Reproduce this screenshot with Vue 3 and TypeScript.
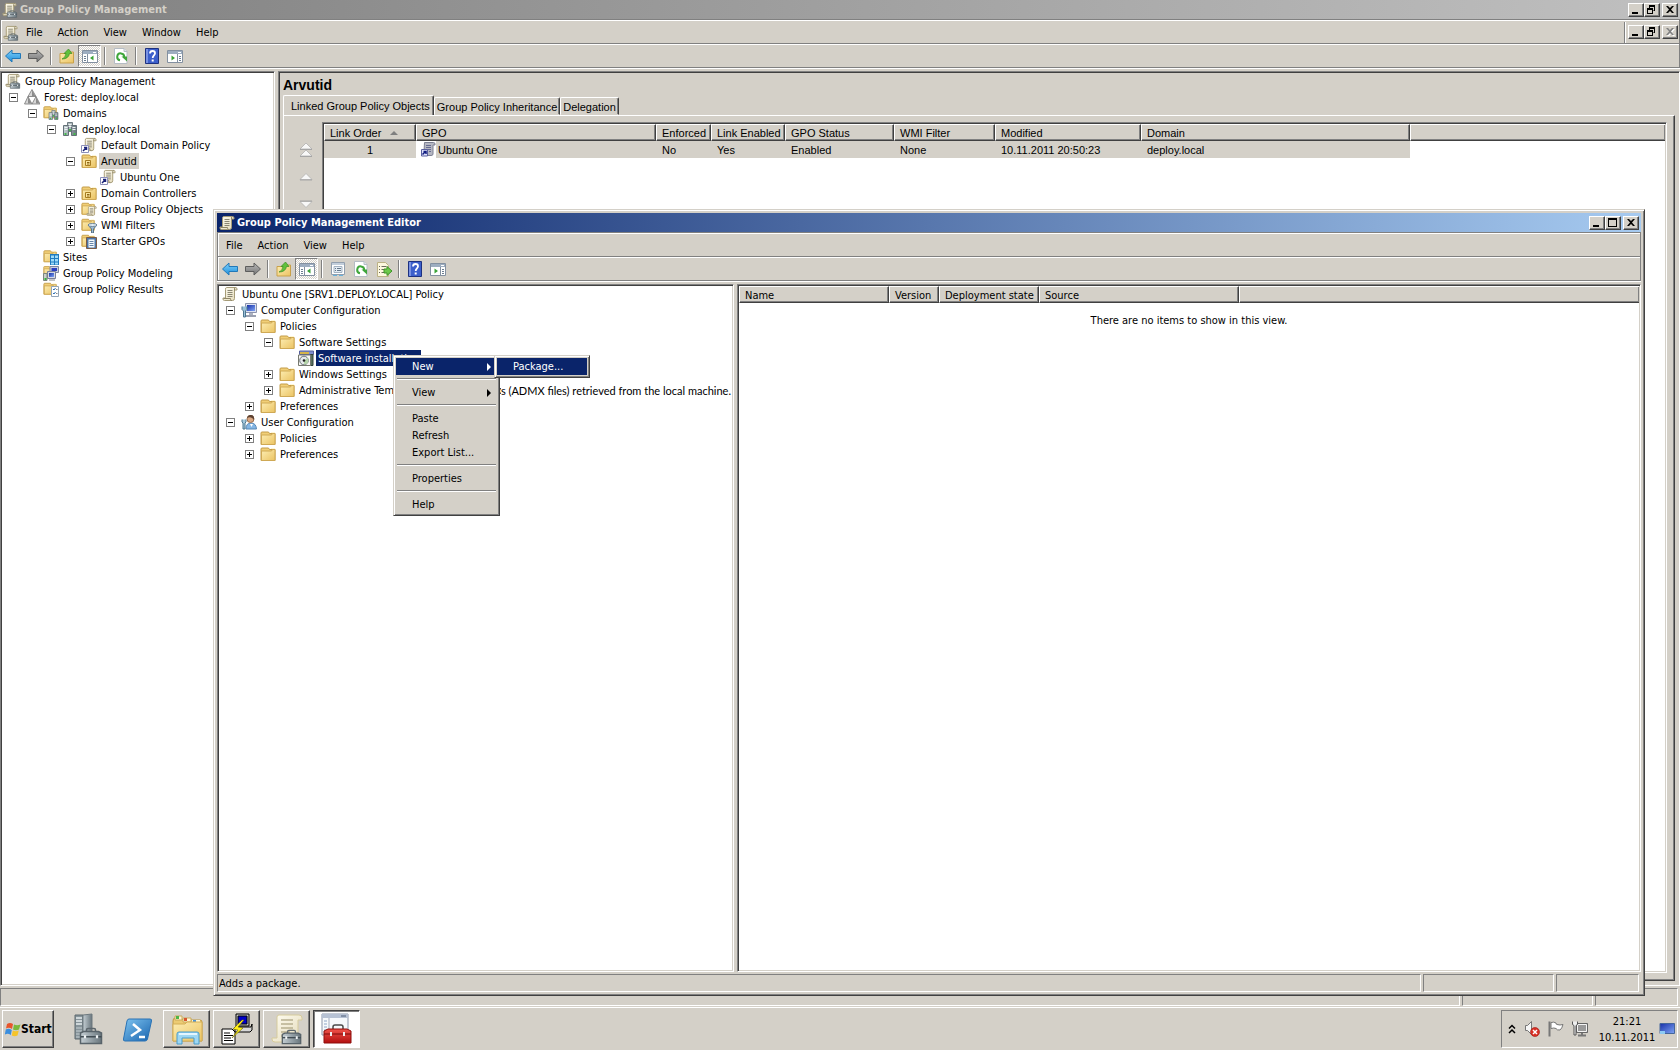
<script setup lang="ts">
interface TreeNode {
  label: string
  tail?: string
  icon: string
  level: number
  state?: 'open' | 'closed'
  selected?: 'active' | 'inactive'
}

interface Tool {
  icon?: string
  name?: string
  pressed?: boolean
}

const mainMenus = ['File', 'Action', 'View', 'Window', 'Help']
const editorMenus = ['File', 'Action', 'View', 'Help']

const mainTools: Tool[] = [
  { icon: 'back', name: 'Back' },
  { icon: 'forward', name: 'Forward' },
  {},
  { icon: 'up', name: 'Up one level' },
  { icon: 'tree-pane', name: 'Console tree', pressed: true },
  {},
  { icon: 'refresh', name: 'Refresh' },
  {},
  { icon: 'help', name: 'Help' },
  { icon: 'action-pane', name: 'Action pane' },
]

const editorTools: Tool[] = [
  { icon: 'back', name: 'Back' },
  { icon: 'forward', name: 'Forward' },
  {},
  { icon: 'up', name: 'Up one level' },
  { icon: 'tree-pane', name: 'Console tree', pressed: true },
  {},
  { icon: 'props', name: 'Properties' },
  { icon: 'refresh', name: 'Refresh' },
  { icon: 'export', name: 'Export list' },
  {},
  { icon: 'help', name: 'Help' },
  { icon: 'action-pane', name: 'Action pane' },
]

const mainTree: TreeNode[] = [
  { label: 'Group Policy Management', icon: 'gpm', level: 0 },
  { label: 'Forest: deploy.local', icon: 'forest', level: 1, state: 'open' },
  { label: 'Domains', icon: 'domains', level: 2, state: 'open' },
  { label: 'deploy.local', icon: 'servers', level: 3, state: 'open' },
  { label: 'Default Domain Policy', icon: 'link', level: 4 },
  { label: 'Arvutid', icon: 'ou', level: 4, state: 'open', selected: 'inactive' },
  { label: 'Ubuntu One', icon: 'link', level: 5 },
  { label: 'Domain Controllers', icon: 'ou', level: 4, state: 'closed' },
  { label: 'Group Policy Objects', icon: 'gpos', level: 4, state: 'closed' },
  { label: 'WMI Filters', icon: 'wmi', level: 4, state: 'closed' },
  { label: 'Starter GPOs', icon: 'starter', level: 4, state: 'closed' },
  { label: 'Sites', icon: 'sites', level: 2 },
  { label: 'Group Policy Modeling', icon: 'modeling', level: 2 },
  { label: 'Group Policy Results', icon: 'results', level: 2 },
]

const editorTree: TreeNode[] = [
  { label: 'Ubuntu One [SRV1.DEPLOY.LOCAL] Policy', icon: 'scroll', level: 0 },
  { label: 'Computer Configuration', icon: 'computer', level: 1, state: 'open' },
  { label: 'Policies', icon: 'folder', level: 2, state: 'open' },
  { label: 'Software Settings', icon: 'folder', level: 3, state: 'open' },
  { label: 'Software installation', icon: 'software', level: 4, selected: 'active' },
  { label: 'Windows Settings', icon: 'folder', level: 3, state: 'closed' },
  { label: 'Administrative Templates: Policy definition', tail: 's (ADMX files) retrieved from the local machine.', icon: 'folder', level: 3, state: 'closed' },
  { label: 'Preferences', icon: 'folder', level: 2, state: 'closed' },
  { label: 'User Configuration', icon: 'user', level: 1, state: 'open' },
  { label: 'Policies', icon: 'folder', level: 2, state: 'closed' },
  { label: 'Preferences', icon: 'folder', level: 2, state: 'closed' },
]

const tabs = ['Linked Group Policy Objects', 'Group Policy Inheritance', 'Delegation']
const gpoColumns = ['Enforced', 'Link Enabled', 'GPO Status', 'WMI Filter', 'Modified', 'Domain']
const gpoValues = ['No', 'Yes', 'Enabled', 'None', '10.11.2011 20:50:23', 'deploy.local']
const orderArrows = ['top', 'raise', 'lower', 'bottom']
const packageColumns = ['Name', 'Version', 'Deployment state', 'Source']

const menuGroups = [
  [{ label: 'New', sub: true, active: true }],
  [{ label: 'View', sub: true, active: false }],
  [
    { label: 'Paste', sub: false, active: false },
    { label: 'Refresh', sub: false, active: false },
    { label: 'Export List...', sub: false, active: false },
  ],
  [{ label: 'Properties', sub: false, active: false }],
  [{ label: 'Help', sub: false, active: false }],
]

const taskButtons = [
  { icon: 'explorer', name: 'Windows Explorer', pressed: false },
  { icon: 'putty', name: 'PuTTY', pressed: false },
  { icon: 'gpm-large', name: 'Group Policy Management', pressed: false },
  { icon: 'mmc', name: 'Group Policy Management Editor', pressed: true },
]

const indent = (level: number) => ({ paddingLeft: `${3 + 19 * Math.max(0, level - 1)}px` })
</script>

<template>
  <div class="desktop">
    <svg class="sprite" aria-hidden="true">
      <defs>
        <linearGradient id="g-folder" x1="0" y1="0" x2="1" y2="1"><stop offset="0" stop-color="#fdeeb4" /><stop offset="1" stop-color="#ebc362" /></linearGradient>
        <linearGradient id="g-paper" x1="0" y1="0" x2="1" y2="1"><stop offset="0" stop-color="#fffdf2" /><stop offset="1" stop-color="#e3d9b8" /></linearGradient>
        <linearGradient id="g-blue" x1="0" y1="0" x2="0" y2="1"><stop offset="0" stop-color="#7fd0fa" /><stop offset="1" stop-color="#1f8fdc" /></linearGradient>
        <linearGradient id="g-gray" x1="0" y1="0" x2="0" y2="1"><stop offset="0" stop-color="#b8b8b8" /><stop offset="1" stop-color="#757575" /></linearGradient>
        <linearGradient id="g-steel" x1="0" y1="0" x2="1" y2="0"><stop offset="0" stop-color="#c4ced3" /><stop offset="1" stop-color="#69767d" /></linearGradient>
        <linearGradient id="g-screen" x1="0" y1="0" x2="1" y2="1"><stop offset="0" stop-color="#1730a8" /><stop offset="1" stop-color="#7fa4f4" /></linearGradient>
        <linearGradient id="g-ps" x1="0" y1="0" x2="1" y2="1"><stop offset="0" stop-color="#7fc4f0" /><stop offset="1" stop-color="#1763ae" /></linearGradient>
        <linearGradient id="g-red" x1="0" y1="0" x2="0" y2="1"><stop offset="0" stop-color="#f0534a" /><stop offset="1" stop-color="#b3100f" /></linearGradient>
      </defs>

      <symbol id="scroll" viewBox="0 0 16 16">
        <path d="M4.500 1.500h9q1.500 0 1.500 1.500v1h-2.500v8.500q0 2-2 2h-8q-1.500 0-1.500-1.500v-1h2.500v-8.500q0-2 1-2z" fill="url(#g-paper)" stroke="#a69c78" />
        <path d="M12.500 4.500V3q0-1.500 1-1.500M1.500 12.500h7v1q.5 1 1.500 1" fill="none" stroke="#8f8667" />
        <path d="M5.500 4.500h5M5.500 6.500h5M5.500 8.500h5M5.500 10.500h5" stroke="#8a8673" />
      </symbol>
      <symbol id="toolbox" viewBox="0 0 16 12">
        <path d="M5 3.500V2q0-1 1-1h4q1 0 1 1v1.500" fill="none" stroke="#5c666c" />
        <path d="M1 4l2-1h10l2 1v7H1z" fill="url(#g-steel)" stroke="#58636a" />
        <path d="M1 6.500h14" stroke="#414c53" /><path d="M4 5.500v2M12 5.500v2" stroke="#eef2f4" stroke-width="1.500" />
      </symbol>
      <symbol id="gpm" viewBox="0 0 16 16">
        <use href="#scroll" width="15" height="15" /><use href="#toolbox" x="4" y="8" width="12" height="8" />
      </symbol>
      <symbol id="link" viewBox="0 0 16 16">
        <use href="#scroll" x="1" width="15" height="15" />
        <path d="M.5 8.500h7v7h-7z" fill="#fff" stroke="#8c8fb8" /><path d="M2 14l3.500-3.500M3 10.500h2.500V13" fill="none" stroke="#1a2378" stroke-width="1.500" />
      </symbol>
      <symbol id="link-dim" viewBox="0 0 16 16">
        <path d="M4.500 1.500h9q1.500 0 1.500 1.500v1h-2v9q0 1.500-2 1.500h-8v-3h1z" fill="#b5b7c2" stroke="#7d8093" />
        <path d="M6 4.500h5M6 6.500h5M7 8.500h4M9 10.500h2" stroke="#666b91" />
        <path d="M1.500 8.500h6v6.500h-6z" fill="#dfe2fa" stroke="#5a60a0" /><path d="M2.500 13.500l3-3M3.500 10.500h2.500v2.500" fill="none" stroke="#101c80" stroke-width="1.500" />
      </symbol>
      <symbol id="forest" viewBox="0 0 16 16">
        <path d="M8 .5l4 7H4zM4 7.500l4 7.500H.5zM12 7.500l4 7.500H8z" fill="#d6d6d6" stroke="#777" stroke-linejoin="round" stroke-width=".8" />
        <path d="M8 1v6.500h3.500zM4 8v6.500h3.500zM12 8v6.500h3.500z" fill="#8c8c8c" />
      </symbol>
      <symbol id="folder" viewBox="0 0 16 16">
        <path d="M1 4V3q0-1 1-1h6.500l1 1.500H15v11H1z" fill="#f1cf77" stroke="#c39c48" />
        <path d="M1.500 5h10l1-1.500H15v11H1.500z" fill="url(#g-folder)" stroke="#cfa955" /><path d="M11 2.500h4" stroke="#fff7d5" />
      </symbol>
      <symbol id="servers" viewBox="0 0 16 16">
        <path d="M5.500 1.500h5v9h-5z" fill="#aeb8bc" stroke="#6f7b81" /><path d="M1.500 4.500h5v10h-5zM9.500 4.500h5v10h-5z" fill="url(#g-steel)" stroke="#647178" />
        <path d="M6.500 3.500h3M6.500 5.500h3M2.500 6.500h3M2.500 8.500h3M10.500 6.500h3M10.500 8.500h3" stroke="#eef3f4" /><path d="M2.500 12h2v2h-2zM11.500 12h2v2h-2zM7 8h2v2H7z" fill="#43b84a" />
      </symbol>
      <symbol id="domains" viewBox="0 0 16 16">
        <use href="#folder" width="14" height="14" /><use href="#servers" x="5" y="4" width="11" height="12" />
      </symbol>
      <symbol id="ou" viewBox="0 0 16 16">
        <use href="#folder" width="16" height="16" /><path d="M4.500 7.500h5v5h-5z" fill="#fbe6a0" stroke="#a77c21" /><path d="M6 9.500h2.500M6 11h2.500" stroke="#8f6614" />
      </symbol>
      <symbol id="gpos" viewBox="0 0 16 16">
        <use href="#folder" width="14" height="15" /><use href="#scroll" x="5" y="4" width="11" height="12" />
      </symbol>
      <symbol id="wmi" viewBox="0 0 16 16">
        <use href="#folder" width="14" height="15" /><path d="M7 8h9l-3.500 4v4h-2v-4z" fill="#9dbbd2" stroke="#5a7488" /><ellipse cx="11.500" cy="8" rx="4.500" ry="1.500" fill="#dfeaf2" stroke="#6e8698" />
      </symbol>
      <symbol id="starter" viewBox="0 0 16 16">
        <use href="#folder" width="14" height="15" /><path d="M5.500 4.500h10v11h-10z" fill="#4c76a8" stroke="#7b5b45" /><path d="M7.500 6.500h6v8h-6z" fill="#f4f8fc" /><path d="M8.500 8.500h4M8.500 10.500h4M8.500 12.500h4" stroke="#6685a8" />
      </symbol>
      <symbol id="sites" viewBox="0 0 16 16">
        <use href="#folder" width="14" height="14" /><path d="M7 5h9v11H7z" fill="#1f7bc0" /><path d="M8 6.500h3v2.500H8zM12 6.500h3v2.500h-3zM8 10h3v2.500H8zM12 10h3v2.500h-3zM8 13.500h3v2H8zM12 13.500h3v2h-3z" fill="#9fdcf8" />
      </symbol>
      <symbol id="modeling" viewBox="0 0 16 16">
        <use href="#folder" width="12" height="12" /><path d="M7 1.500h8.500v6H7z" fill="#c9cfe0" stroke="#7f88a0" /><path d="M8.500 3H14v3H8.500z" fill="#2b3fc0" />
        <path d="M4.500 6.500h8v7h-8z" fill="#d5d9e4" stroke="#79809a" /><path d="M6 8h5v4H6z" fill="url(#g-screen)" /><path d="M.5 8.500h3.500v7H.5z" fill="#c9d0c9" stroke="#7d867d" /><path d="M1.500 13h2v2h-2z" fill="#35b43b" /><path d="M6 15h6" stroke="#888" />
      </symbol>
      <symbol id="results" viewBox="0 0 16 16">
        <use href="#folder" width="14" height="15" /><path d="M8.500 5.500h7v10h-7z" fill="#fff" stroke="#93a4b6" /><path d="M10 8l1 1 1.500-2M10 12l1 1 1.500-2" fill="none" stroke="#2d6fb2" /><path d="M13 8.500h1.500M13 12.500h1.500" stroke="#888" />
      </symbol>
      <symbol id="computer" viewBox="0 0 16 16">
        <path d="M4.500 1.500h11v9h-11z" fill="#dde2f0" stroke="#8c93ad" /><path d="M6 3h8v6H6z" fill="url(#g-screen)" /><path d="M8 11h4v2H8z" fill="#adb3c2" /><path d="M5 14h10" stroke="#9aa0b0" stroke-width="2" />
        <path d="M1 4.500v3l1.500 1.500v6h2v-6L6 7.500v-3" fill="#9ac0d8" stroke="#4d7690" />
      </symbol>
      <symbol id="user" viewBox="0 0 16 16">
        <path d="M5 15q0-6 5-6t5.500 6z" fill="#84b6e4" stroke="#5988b5" /><circle cx="9.500" cy="5" r="3.500" fill="#d9a884" stroke="#9b7050" /><path d="M6 4q1-3.500 4-3 3.500 0 3 5-1-2-3-2.500T6 4z" fill="#5c4131" /><path d="M9 10l1.500 3L12 10z" fill="#fff" />
        <path d="M1 5.500v2.500l1 1v6h2V9l1-1V5.500" fill="#a4c8dc" stroke="#4d7690" />
      </symbol>
      <symbol id="software" viewBox="0 0 16 16">
        <path d="M1.500 1h14v3.500h-14z" fill="#7f8fd0" stroke="#56609c" /><path d="M2 2h9v2H2z" fill="#d6b548" /><path d="M12.500 4.500h2.500v11h-2.500z" fill="#59715d" stroke="#34433a" /><path d="M.5 5h12v10.500H.5z" fill="#f8f8f4" stroke="#77796f" />
        <circle cx="6" cy="10.500" r="4.300" fill="#e5e9ec" stroke="#6c7479" /><path d="M6 10.500l3.500-2.500A4 4 0 016 14.500z" fill="#b5d5a9" /><circle cx="6" cy="10.500" r="1.300" fill="#222" />
      </symbol>

      <symbol id="back" viewBox="0 0 16 16"><path d="M.5 8L7 2v3.500h8.500v5H7V14z" fill="url(#g-blue)" stroke="#2278b8" stroke-linejoin="round" /></symbol>
      <symbol id="forward" viewBox="0 0 16 16"><path d="M15.500 8L9 2v3.500H.5v5H9V14z" fill="url(#g-gray)" stroke="#5d5d5d" stroke-linejoin="round" /></symbol>
      <symbol id="up" viewBox="0 0 16 16">
        <path d="M1 5.500h6l1-1.500h6.500v11H1z" fill="url(#g-folder)" stroke="#c9a14a" />
        <path d="M3 11q3.500-1 4-5.500H5l4.500-4.500L13 5.500h-2.500Q9.500 11 3 11z" fill="#5fc13c" stroke="#3b8d22" stroke-width=".7" />
      </symbol>
      <symbol id="tree-pane" viewBox="0 0 16 16">
        <path d="M.5 2.500h15v12H.5z" fill="#fff" stroke="#8390a0" /><path d="M1 3h14v3H1z" fill="#9dadc0" /><path d="M11 4.500h3" stroke="#fff" /><path d="M5.500 6v8" stroke="#8390a0" />
        <path d="M2 8.500h2M2 10.500h2M2 12.500h2" stroke="#6d7f92" /><path d="M11.500 7.500v5L8 10z" fill="#3aa336" />
      </symbol>
      <symbol id="action-pane" viewBox="0 0 16 16">
        <path d="M.5 2.500h15v12H.5z" fill="#fff" stroke="#8390a0" /><path d="M1 3h14v3H1z" fill="#9dadc0" /><path d="M11 4.500h3" stroke="#fff" /><path d="M10.500 6v8" stroke="#8390a0" />
        <path d="M12 8.500h2M12 10.500h2M12 12.500h2" stroke="#6d7f92" /><path d="M4.500 7.500v5L8 10z" fill="#3aa336" />
      </symbol>
      <symbol id="refresh" viewBox="0 0 16 16">
        <path d="M1.500.5h9.500l3 3v12H1.500z" fill="#fff" stroke="#b5bcc4" /><path d="M11 .5v3h3" fill="#dfe6ea" stroke="#b5bcc4" />
        <path d="M7 12.300A3.500 3.500 0 1111.200 9" fill="none" stroke="#3fa63b" stroke-width="2" /><path d="M8.500 8.500h5.500v5z" fill="#3fa63b" />
      </symbol>
      <symbol id="props" viewBox="0 0 16 16">
        <path d="M1.500 1.500h13v12h-13z" fill="#fff" stroke="#929fae" /><path d="M2 2h12v2H2z" fill="#c2cedb" /><path d="M4 5.500h8v6H4z" fill="#e4edf5" stroke="#a3b2c2" /><path d="M5 7.500h1M7 7.500h4M5 9.500h1M7 9.500h4" stroke="#66788a" /><path d="M3 14.500h4M9 14.500h4" stroke="#67b2dd" />
      </symbol>
      <symbol id="export" viewBox="0 0 16 16">
        <path d="M1.500 1.500h8l3 3v11h-11z" fill="#fdf8df" stroke="#bcb285" /><path d="M3 5.500h1M5.500 5.500h5M3 8.500h1M5.500 8.500h4M3 11.500h1M5.500 11.500h3" stroke="#6b6b5d" />
        <path d="M8 8h3V5.500l5 4.500-5 4.500V12H8z" fill="#6cc84a" stroke="#3e9428" />
      </symbol>
      <symbol id="help" viewBox="0 0 16 16">
        <path d="M1.500.5h13v15h-13z" fill="#3c5fcb" stroke="#1d3180" /><path d="M2 1h2v14H2z" fill="#7891e2" />
        <path d="M6 5.500Q6 3 8.500 3T11 5.300C11 7.300 8.700 7.500 8.700 10" fill="none" stroke="#fff" stroke-width="1.800" /><path d="M7.700 11.500h2v2h-2z" fill="#fff" />
      </symbol>

      <symbol id="minimize" viewBox="0 0 14 12"><path d="M3 8h6v2H3z" /></symbol>
      <symbol id="maximize" viewBox="0 0 14 12"><path d="M2 1h9v9H2zM3 3v6h7V3z" fill-rule="evenodd" /></symbol>
      <symbol id="restore" viewBox="0 0 14 12"><path d="M4 1h6v6H8.500V6H9V3H5v1H4zM2 4h6v6H2zM3 6v3h4V6z" fill-rule="evenodd" /></symbol>
      <symbol id="close" viewBox="0 0 14 12"><path d="M3 2h2l2 2 2-2h2L8 5.500 11 9H9L7 7 5 9H3l3-3.500z" /></symbol>

      <symbol id="raise" viewBox="0 0 14 16"><path d="M7 4.500l6 6H1z" fill="#f8f8f8" stroke="#aaa" stroke-width=".7" /><path d="M1 11h12" stroke="#a5a5a5" /></symbol>
      <symbol id="lower" viewBox="0 0 14 16"><path d="M7 11.500l6-6H1z" fill="#f8f8f8" stroke="#aaa" stroke-width=".7" /><path d="M1 5h12" stroke="#a5a5a5" /></symbol>
      <symbol id="top" viewBox="0 0 14 16"><path d="M7 1l6 6H1zM7 8l6 6H1z" fill="#f8f8f8" stroke="#aaa" stroke-width=".7" /><path d="M1 7.500h12M1 14.500h12" stroke="#a5a5a5" /></symbol>
      <symbol id="bottom" viewBox="0 0 14 16"><path d="M7 8l6-6H1zM7 15l6-6H1z" fill="#f8f8f8" stroke="#aaa" stroke-width=".7" /></symbol>

      <symbol id="flag4" viewBox="0 0 16 16">
        <path d="M2 3q3-2 6 0L7 8Q4 6 1 7.500z" fill="#e8552c" /><path d="M9 3.500q3 1.500 6.500 0L14 8.500q-3 1.500-6 0z" fill="#7ab83a" /><path d="M.8 8.500q3-1.500 6 .5l-1 5Q3 12-.2 13.500z" fill="#3b8ede" /><path d="M7.800 9.500q3 1.500 6 0l-1.300 5q-3 1.500-5.700 0z" fill="#f6c42a" />
      </symbol>
      <symbol id="server-manager" viewBox="0 0 32 32">
        <path d="M4 2h8v24H4z" fill="#87949a" stroke="#5d696f" /><path d="M12 2l9-1v25h-9z" fill="url(#g-steel)" stroke="#6d797f" /><path d="M5 5h6M5 8h6M5 11h6" stroke="#e6ecee" stroke-width="1.500" /><path d="M5 15h6M5 18h6M5 21h6M5 24h6" stroke="#c5ced2" />
        <use href="#toolbox" x="8" y="14" width="24" height="18" />
      </symbol>
      <symbol id="powershell" viewBox="0 0 32 32">
        <path d="M8 6h21q2 0 1.500 2l-4 18q-.5 2-2.500 2H4q-2 0-1.500-2L6 8q.5-2 2-2z" fill="url(#g-ps)" stroke="#2a72b4" /><path d="M12 11l7 6-9 6M18 24h6" fill="none" stroke="#fff" stroke-width="2.500" />
      </symbol>
      <symbol id="explorer" viewBox="0 0 32 32">
        <path d="M2 8q0-3 2-3h6l2 2h17q2 0 2 2v19H2z" fill="#eccb73" stroke="#bf9a45" /><path d="M4 3h7v4H4z" fill="#fff6d2" stroke="#caa95a" /><path d="M5 3h3v3H5z" fill="#4db648" /><path d="M12 5h8v4h-8z" fill="#fff6d2" stroke="#caa95a" /><path d="M13 5h3v3h-3z" fill="#d8562f" /><path d="M21 7h8v3h-8z" fill="#fff6d2" /><path d="M22 7h3v2h-3z" fill="#4a93d6" />
        <path d="M2 11h12l2-2h15v19H2z" fill="url(#g-folder)" stroke="#d4ae57" />
        <path d="M6 31V21q0-2 2-2h18q2 0 2 2v10h-5v-6H11v6z" fill="#9ed7f3" stroke="#4b9ccb" /><path d="M8 21h18" stroke="#e4f6ff" stroke-width="2" />
      </symbol>
      <symbol id="putty" viewBox="0 0 32 32">
        <path d="M15 1h13v12H15z" fill="#c6c6c6" stroke="#000" /><path d="M17 3h9v8h-9z" fill="#0000c8" stroke="#000" /><path d="M14 14h16l1-3v6l-2 2H14z" fill="#d7d7d7" stroke="#000" />
        <path d="M1 16h10l3 3v12H1z" fill="#fff" stroke="#000" /><path d="M3 20h6M3 22.500h9M3 25h7M3 27.500h9" stroke="#000" /><path d="M21 7l-9 9 5 1-6 8L22 15l-5-1 6-7z" fill="#ffef19" stroke="#6b6400" stroke-width=".6" />
      </symbol>
      <symbol id="gpm-large" viewBox="0 0 32 32">
        <path d="M8 2h20q3 0 3 3v2h-4v18q0 4-4 4H4q-3 0-3-3v-1h5V4q0-2 2-2z" fill="url(#g-paper)" stroke="#d6cb9c" /><path d="M10 7h12M10 11h12M10 15h12M10 19h9M10 23h6" stroke="#b8b090" stroke-width="1.500" /><use href="#toolbox" x="10" y="16" width="21" height="16" />
      </symbol>
      <symbol id="mmc" viewBox="0 0 32 32">
        <path d="M1 1h26v21H1z" fill="#f6f9fc" stroke="#8994a8" /><path d="M1 1h26v4H1z" fill="#b7c2d4" /><path d="M20 3h5" stroke="#4f5e78" /><path d="M8 5v17" stroke="#a4aebf" /><path d="M3 8h3M3 11h3M3 14h3M3 17h3" stroke="#8ea6c7" />
        <path d="M12 17v-3q0-2 2-2h6q2 0 2 2v3" fill="none" stroke="#4b4b4b" stroke-width="1.500" /><path d="M3 18l4-2h19l4 2v12H3z" fill="url(#g-red)" stroke="#8e0f0c" /><path d="M3 21h27" stroke="#7c0c0a" /><path d="M10 19v4M23 19v4" stroke="#eee" stroke-width="2" />
      </symbol>
      <symbol id="chevrons" viewBox="0 0 8 10"><path d="M1 4.500l3-3 3 3M1 9l3-3 3 3" fill="none" stroke="#000" stroke-width="1.500" /></symbol>
      <symbol id="volume" viewBox="0 0 16 16">
        <path d="M1.500 4.500h2l4-4v13l-4-4h-2z" fill="#f6f6f6" stroke="#777" /><circle cx="11" cy="11" r="4.500" fill="#d93025" stroke="#a01a12" stroke-width=".6" /><path d="M9 9l4 4M13 9l-4 4" stroke="#fff" stroke-width="1.500" />
      </symbol>
      <symbol id="flag" viewBox="0 0 16 16"><path d="M1.500.5v15" stroke="#777" stroke-width="2" /><path d="M3 1.500q3-1 5 .5 0 1.500 1 1.500 3 1 6 0-1 4-3 5.500-3 .5-4-1.500-2-1-5 0z" fill="#fff" stroke="#777" /></symbol>
      <symbol id="network" viewBox="0 0 16 16"><path d="M4.500 2.500h11v9h-11z" fill="#9a9a9a" stroke="#666" /><path d="M5.500 3.500h9v7h-9z" fill="none" stroke="#f4f4f4" /><path d="M6 14.500h8M10 12v2" stroke="#777" stroke-width="2" /><path d="M.5.500v3l1.500 1V14h2V4.500l1.500-1v-3" fill="#eee" stroke="#555" /></symbol>
      <symbol id="show-desktop" viewBox="0 0 16 16"><path d="M1 2.500h14.500v10H1z" fill="url(#g-screen)" stroke="#44669c" /><path d="M1 10h5v3H1z" fill="#8ccaf4" /></symbol>
    </svg>

    <section class="console">
      <header class="titlebar dimmed">
        <svg class="icon"><use href="#gpm" /></svg>
        <h1 class="caption">Group Policy Management</h1>
        <div class="controls">
          <button type="button" class="ctl" aria-label="Minimize"><svg><use href="#minimize" /></svg></button>
          <button type="button" class="ctl" aria-label="Restore"><svg><use href="#restore" /></svg></button>
          <button type="button" class="ctl last" aria-label="Close"><svg><use href="#close" /></svg></button>
        </div>
      </header>

      <div class="bars">
        <nav class="menubar">
          <svg class="icon"><use href="#gpm" /></svg>
          <button v-for="m in mainMenus" :key="m" type="button" class="menu-btn">{{ m }}</button>
          <div class="controls mdi">
            <button type="button" class="ctl" aria-label="Minimize child"><svg><use href="#minimize" /></svg></button>
            <button type="button" class="ctl" aria-label="Restore child"><svg><use href="#restore" /></svg></button>
            <button type="button" class="ctl last" disabled aria-label="Close child"><svg><use href="#close" /></svg></button>
          </div>
        </nav>
        <div class="toolbar">
          <template v-for="(t, i) in mainTools" :key="i">
            <button v-if="t.icon" type="button" class="tool" :class="{ pressed: t.pressed }" :aria-label="t.name"><svg class="icon"><use :href="'#' + t.icon" /></svg></button>
            <span v-else class="tool-sep"></span>
          </template>
        </div>
      </div>

      <div class="panes">
        <aside class="sunken main-side">
          <ul class="tree">
            <li v-for="(n, i) in mainTree" :key="i" class="node" :style="indent(n.level)">
              <span v-if="n.level" class="twist"><button v-if="n.state" type="button" class="box" :class="n.state" :aria-label="n.label"></button></span>
              <svg class="icon"><use :href="'#' + n.icon" /></svg>
              <span class="label" :class="n.selected">{{ n.label }}</span>
            </li>
          </ul>
        </aside>

        <main class="sunken details">
          <h2 class="heading">Arvutid</h2>
          <div class="tabs" role="tablist">
            <button v-for="(t, i) in tabs" :key="t" type="button" role="tab" class="tab" :class="{ current: i === 0 }">{{ t }}</button>
          </div>
          <div class="tab-panel">
            <div class="order">
              <button v-for="a in orderArrows" :key="a" type="button" class="order-btn" :aria-label="a"><svg><use :href="'#' + a" /></svg></button>
            </div>
            <div class="sunken list">
              <table class="grid gpo-grid">
                <colgroup><col class="w-order" /><col class="w-gpo" /><col class="w-enf" /><col class="w-link" /><col class="w-status" /><col class="w-wmi" /><col class="w-mod" /><col class="w-dom" /><col /></colgroup>
                <thead>
                  <tr>
                    <th>Link Order<span class="sort"></span></th>
                    <th>GPO</th>
                    <th v-for="c in gpoColumns" :key="c">{{ c }}</th>
                    <th class="rest"></th>
                  </tr>
                </thead>
                <tbody>
                  <tr>
                    <td class="num">1</td>
                    <td class="gpo-cell"><span class="gpo-name"><span class="gpo-icon"><svg class="icon"><use href="#link-dim" /></svg></span><span class="gpo-text">Ubuntu One</span></span></td>
                    <td v-for="v in gpoValues" :key="v">{{ v }}</td>
                    <td class="rest"></td>
                  </tr>
                </tbody>
              </table>
            </div>
          </div>
        </main>
      </div>

      <footer class="status">
        <span class="field grow"></span><span class="field mid"></span><span class="field end"></span>
      </footer>
    </section>

    <section class="editor">
      <header class="titlebar">
        <svg class="icon"><use href="#scroll" /></svg>
        <h2 class="caption">Group Policy Management Editor</h2>
        <div class="controls">
          <button type="button" class="ctl" aria-label="Minimize editor"><svg><use href="#minimize" /></svg></button>
          <button type="button" class="ctl" aria-label="Maximize editor"><svg><use href="#maximize" /></svg></button>
          <button type="button" class="ctl last" aria-label="Close editor"><svg><use href="#close" /></svg></button>
        </div>
      </header>

      <div class="bars">
        <nav class="menubar bare">
          <button v-for="m in editorMenus" :key="m" type="button" class="menu-btn">{{ m }}</button>
        </nav>
        <div class="toolbar">
          <template v-for="(t, i) in editorTools" :key="i">
            <button v-if="t.icon" type="button" class="tool" :class="{ pressed: t.pressed }" :aria-label="t.name"><svg class="icon"><use :href="'#' + t.icon" /></svg></button>
            <span v-else class="tool-sep"></span>
          </template>
        </div>
      </div>

      <div class="panes">
        <aside class="sunken editor-side">
          <ul class="tree">
            <li v-for="(n, i) in editorTree" :key="i" class="node" :style="indent(n.level)">
              <span v-if="n.level" class="twist"><button v-if="n.state" type="button" class="box" :class="n.state" :aria-label="n.label"></button></span>
              <svg class="icon"><use :href="'#' + n.icon" /></svg>
              <span class="label" :class="n.selected">{{ n.label }}</span><span v-if="n.tail" class="tail">{{ n.tail }}</span>
            </li>
          </ul>
        </aside>
        <div class="sunken packages">
          <table class="grid">
            <colgroup><col class="w-name" /><col class="w-ver" /><col class="w-state" /><col class="w-source" /><col /></colgroup>
            <thead>
              <tr><th v-for="c in packageColumns" :key="c">{{ c }}</th><th class="rest"></th></tr>
            </thead>
          </table>
          <p class="empty">There are no items to show in this view.</p>
        </div>
      </div>

      <footer class="status">
        <span class="field grow">Adds a package.</span><span class="field mid"></span><span class="field end"></span>
      </footer>
    </section>

    <div class="popup context" role="menu">
      <template v-for="(g, gi) in menuGroups" :key="gi">
        <hr v-if="gi" class="rule" />
        <button v-for="m in g" :key="m.label" type="button" role="menuitem" class="item" :class="{ active: m.active }">{{ m.label }}<span v-if="m.sub" class="arrow"></span></button>
      </template>
    </div>
    <div class="popup submenu" role="menu">
      <button type="button" role="menuitem" class="item active">Package...</button>
    </div>

    <footer class="taskbar">
      <button type="button" class="task start"><svg class="icon"><use href="#flag4" /></svg>Start</button>
      <button type="button" class="quick" aria-label="Server Manager"><svg class="large"><use href="#server-manager" /></svg></button>
      <button type="button" class="quick" aria-label="Windows PowerShell"><svg class="large"><use href="#powershell" /></svg></button>
      <button v-for="b in taskButtons" :key="b.name" type="button" class="task app" :class="{ pressed: b.pressed }" :aria-label="b.name"><svg class="large"><use :href="'#' + b.icon" /></svg></button>
      <div class="tray">
        <button type="button" class="tray-btn narrow" aria-label="Show hidden icons"><svg class="chev"><use href="#chevrons" /></svg></button>
        <button type="button" class="tray-btn" aria-label="Volume"><svg class="icon"><use href="#volume" /></svg></button>
        <button type="button" class="tray-btn" aria-label="Action Center"><svg class="icon"><use href="#flag" /></svg></button>
        <button type="button" class="tray-btn" aria-label="Network"><svg class="icon"><use href="#network" /></svg></button>
        <time class="clock"><span>21:21</span><span>10.11.2011</span></time>
        <button type="button" class="tray-btn desk" aria-label="Show desktop"><svg class="icon"><use href="#show-desktop" /></svg></button>
      </div>
    </footer>
  </div>
</template>

<style>
html,
body {
  background: #d4d0c8;
}
</style>

<style scoped>
.desktop {
  position: relative;
  display: flex;
  flex-direction: column;
  height: 100vh;
  overflow: hidden;
  background: #d4d0c8;
  color: #000;
  font: 11px/16px "DejaVu Sans Condensed", "DejaVu Sans", sans-serif;
}
.desktop *,
.desktop *::before,
.desktop *::after {
  box-sizing: border-box;
}
.sprite {
  position: absolute;
  width: 0;
  height: 0;
}
button {
  margin: 0;
  padding: 0;
  border: 0;
  background: none;
  color: inherit;
  font: inherit;
}
.icon {
  display: block;
  flex: none;
  width: 16px;
  height: 16px;
}
.console {
  flex: 1;
  min-height: 0;
  display: flex;
  flex-direction: column;
}

/* title bars */
.titlebar {
  flex: none;
  display: flex;
  align-items: center;
  gap: 2px;
  height: 19px;
  padding: 0 2px;
  background: linear-gradient(90deg, #0a246a, #a6caf0);
  color: #fff;
}
.titlebar.dimmed {
  background: linear-gradient(90deg, #808080, #c0c0c0);
  color: #d4d0c8;
}
.caption {
  margin: 0;
  font-size: 11px;
  font-weight: bold;
  line-height: 16px;
}
.controls {
  display: flex;
  align-items: center;
  margin-left: auto;
}
.ctl {
  width: 16px;
  height: 14px;
  border: 1px solid;
  border-color: #fff #404040 #404040 #fff;
  background: #d4d0c8;
  box-shadow: inset -1px -1px #808080;
}
.ctl svg {
  display: block;
  width: 14px;
  height: 12px;
}
.ctl.last {
  margin-left: 2px;
}
.ctl:disabled svg {
  fill: #808080;
  filter: drop-shadow(1px 1px 0 #fff);
}

/* menu bar and toolbar */
.bars {
  flex: none;
  border: 1px solid #808080;
  border-bottom: 0;
  box-shadow: inset 1px 1px #fff, 0 1px #fff;
  margin-bottom: 3px;
}
.menubar {
  display: flex;
  align-items: center;
  height: 24px;
  padding: 2px 1px 0 2px;
  border-bottom: 1px solid #808080;
}
.menubar.bare {
  padding-left: 1px;
}
.menu-btn {
  padding: 0 8px 0 7px;
  line-height: 18px;
}
.mdi {
  align-self: stretch;
  padding: 0 0 2px 3px;
  border-left: 1px solid #808080;
  box-shadow: inset 1px 0 #fff;
}
.toolbar {
  display: flex;
  align-items: center;
  height: 24px;
  border-top: 1px solid #fff;
  border-bottom: 1px solid #808080;
}
.tool {
  display: grid;
  place-items: center;
  width: 23px;
  height: 22px;
}
.tool.pressed {
  border: 1px solid;
  border-color: #808080 #fff #fff #808080;
  background: conic-gradient(#fff 25%, #d4d0c8 0 50%, #fff 0 75%, #d4d0c8 0) 0 0 / 2px 2px;
}
.tool-sep {
  width: 2px;
  height: 18px;
  margin: 0 3px;
  border-left: 1px solid #808080;
  border-right: 1px solid #fff;
}

/* panes */
.panes {
  flex: 1;
  min-height: 0;
  display: flex;
  gap: 3px;
}
.sunken {
  padding: 1px;
  border: 1px solid;
  border-color: #808080 #fff #fff #808080;
  background: #fff;
  box-shadow: inset 1px 1px #404040, inset -1px -1px #d4d0c8;
  overflow: hidden;
}
.main-side {
  flex: none;
  width: 275px;
}
.editor-side {
  flex: none;
  width: 517px;
}
.tree {
  margin: 0;
  padding: 0;
  list-style: none;
}
.node {
  display: flex;
  align-items: center;
  height: 16px;
  white-space: nowrap;
}
.twist {
  flex: none;
  display: flex;
  width: 19px;
  padding-left: 4px;
}
.box {
  display: block;
  width: 9px;
  height: 9px;
  border: 1px solid #808080;
  background: linear-gradient(#000, #000) center / 5px 1px no-repeat;
}
.box.closed {
  background: linear-gradient(#000, #000) center / 5px 1px no-repeat, linear-gradient(#000, #000) center / 1px 5px no-repeat;
}
.label {
  min-width: 0;
  margin-left: 2px;
  padding: 2px 2px 0;
  line-height: 14px;
  overflow: hidden;
}
.label.inactive {
  background: #d4d0c8;
}
.label.active {
  background: #0a246a;
  color: #fff;
}
.tail {
  flex: none;
  margin-left: auto;
  padding: 2px 1px 0 0;
  font-family: Lato, "DejaVu Sans Condensed", sans-serif;
  line-height: 14px;
}

/* details pane */
.details {
  flex: 1;
  min-width: 0;
  display: flex;
  flex-direction: column;
  padding: 1px 4px 4px;
  background: #d4d0c8;
  font-family: "Liberation Sans", Arial, sans-serif;
}
.heading {
  flex: none;
  margin: 0;
  padding-top: 2px;
  font-size: 14px;
  line-height: 20px;
}
.tabs {
  flex: none;
  display: flex;
  align-items: flex-end;
  height: 20px;
}
.tab {
  height: 18px;
  padding: 1px 2px 0;
  border: 1px solid;
  border-color: #fff #404040 transparent #fff;
  border-radius: 2px 2px 0 0;
  box-shadow: inset -1px 0 #808080;
  white-space: nowrap;
}
.tab.current {
  height: 21px;
  margin-bottom: -1px;
  padding: 0 3px 0 7px;
  border-bottom: 0;
  background: #d4d0c8;
}
.tab-panel {
  flex: 1;
  min-height: 0;
  display: flex;
  padding: 6px 7px 7px 0;
  border: 1px solid;
  border-color: #fff #404040 #404040 #fff;
  box-shadow: inset -1px -1px #808080;
}
.order {
  flex: none;
  display: flex;
  flex-direction: column;
  align-items: center;
  gap: 11px;
  width: 38px;
  padding: 20px 0 0 6px;
}
.order-btn,
.order-btn svg {
  display: block;
  width: 14px;
  height: 16px;
}
.list {
  flex: 1;
  min-width: 0;
}

/* tables */
.grid {
  width: 100%;
  border-collapse: separate;
  border-spacing: 0;
  table-layout: fixed;
}
.grid th {
  height: 17px;
  padding: 2px 4px 0 5px;
  border: 1px solid;
  border-color: #fff #404040 #404040 #fff;
  background: #d4d0c8;
  box-shadow: inset -1px -1px #808080;
  font-weight: normal;
  line-height: 13px;
  text-align: left;
  white-space: nowrap;
  overflow: hidden;
}
.grid th.rest {
  border-right: 0;
}
.grid td {
  height: 17px;
  padding: 2px 6px 0;
  background: #d4d0c8;
  line-height: 15px;
  white-space: nowrap;
}
.grid td.rest {
  background: #fff;
}
.grid td.num {
  text-align: center;
}
.grid td.gpo-cell {
  padding: 0;
}
.gpo-name {
  display: flex;
  gap: 2px;
  height: 17px;
}
.gpo-icon {
  width: 20px;
  padding-left: 4px;
  background: #fff;
}
.gpo-text {
  padding-top: 2px;
}
.sort {
  display: inline-block;
  margin: 0 0 2px 9px;
  border: 4px solid transparent;
  border-top: 0;
  border-bottom-color: #808080;
}
.w-order { width: 92px; }
.w-gpo { width: 240px; }
.w-enf { width: 55px; }
.w-link { width: 74px; }
.w-status { width: 109px; }
.w-wmi { width: 101px; }
.w-mod { width: 146px; }
.w-dom { width: 269px; }
.w-name { width: 150px; }
.w-ver { width: 50px; }
.w-state { width: 100px; }
.w-source { width: 200px; }

/* status bars */
.status {
  flex: none;
  display: flex;
  gap: 2px;
  height: 18px;
  margin-top: 2px;
  padding-right: 2px;
}
.field {
  padding: 1px 0 0 1px;
  border: 1px solid;
  border-color: #808080 #fff #fff #808080;
  line-height: 15px;
}
.grow { flex: 1; }
.mid { width: 131px; }
.end { width: 83px; }

/* editor window */
.editor {
  position: absolute;
  top: 209px;
  right: 35px;
  bottom: 54px;
  left: 213px;
  display: flex;
  flex-direction: column;
  padding: 3px;
  border: 1px solid;
  border-color: #d4d0c8 #404040 #404040 #d4d0c8;
  background: #d4d0c8;
  box-shadow: inset 1px 1px #fff, inset -1px -1px #808080;
}
.packages {
  flex: 1;
  min-width: 0;
}
.empty {
  margin: 10px 0 0;
  text-align: center;
}

/* popup menus */
.popup {
  position: absolute;
  display: flex;
  flex-direction: column;
  padding: 2px;
  border: 1px solid;
  border-color: #d4d0c8 #404040 #404040 #d4d0c8;
  background: #d4d0c8;
  box-shadow: inset 1px 1px #fff, inset -1px -1px #808080;
}
.context {
  top: 355px;
  left: 393px;
  width: 107px;
}
.submenu {
  top: 355px;
  left: 494px;
  width: 96px;
}
.item {
  display: flex;
  align-items: center;
  justify-content: space-between;
  height: 17px;
  padding: 0 6px 0 16px;
  white-space: nowrap;
}
.item.active {
  background: #0a246a;
  color: #fff;
}
.arrow {
  border: 4px solid transparent;
  border-left-color: currentColor;
  border-right: 0;
}
.rule {
  width: auto;
  height: 2px;
  margin: 3px 1px 4px;
  border: 0;
  border-top: 1px solid #808080;
  border-bottom: 1px solid #fff;
}

/* taskbar */
.taskbar {
  flex: none;
  display: flex;
  gap: 3px;
  height: 44px;
  padding: 3px 2px 2px;
  border-top: 1px solid #d4d0c8;
  box-shadow: inset 0 1px #fff;
}
.task {
  display: grid;
  place-items: center;
  height: 38px;
  border: 1px solid;
  border-color: #fff #404040 #404040 #fff;
  box-shadow: inset -1px -1px #808080;
}
.start {
  display: flex;
  align-items: center;
  width: 52px;
  margin-right: 6px;
  padding-left: 2px;
  font-size: 12px;
  font-weight: bold;
}
.app {
  width: 47px;
}
.app.pressed {
  border-color: #404040 #fff #fff #404040;
  background: #fff;
  box-shadow: inset 1px 1px #808080;
}
.quick {
  display: grid;
  place-items: center;
  width: 47px;
  height: 38px;
}
.large {
  display: block;
  width: 32px;
  height: 32px;
}
.tray {
  display: flex;
  align-items: center;
  margin-left: auto;
  height: 38px;
  padding-left: 6px;
  border: 1px solid;
  border-color: #808080 #fff #fff #808080;
}
.tray-btn {
  display: grid;
  place-items: center;
  width: 24px;
  height: 24px;
}
.tray-btn.narrow {
  width: 6px;
  margin-right: 6px;
}
.tray-btn.desk {
  width: 20px;
}
.chev {
  width: 8px;
  height: 10px;
}
.clock {
  display: flex;
  flex-direction: column;
  align-items: center;
  width: 65px;
  padding: 1px 0 0 5px;
}
</style>
